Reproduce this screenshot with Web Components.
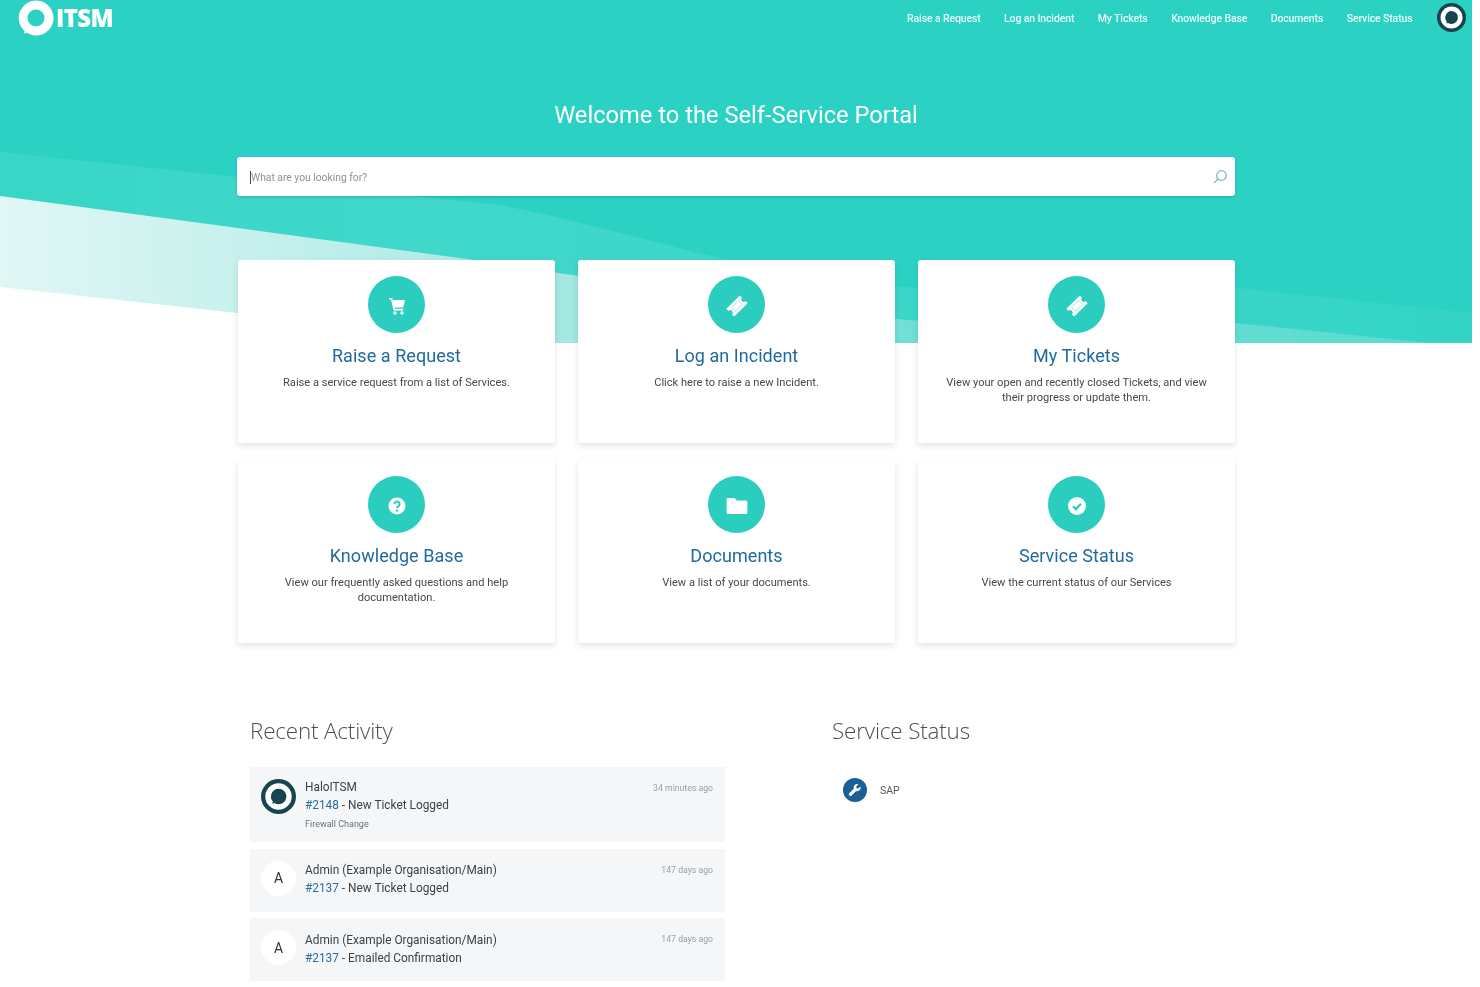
<!DOCTYPE html>
<html lang="en"><head><meta charset="utf-8"><title>Self-Service Portal</title>
<style>
html,body{margin:0;padding:0;background:#fff}
body{font-family:Roboto,"Liberation Sans",sans-serif;color:#3c4148;width:1480px;height:987px;overflow:hidden}
</style></head><body>
<itsm-portal></itsm-portal>
<script>
const ring=(size,dark)=>`<svg width="${size}" height="${size}" viewBox="0 0 36 36" aria-hidden="true">
${dark?'<circle cx="18" cy="18" r="18" fill="#17454f"/><circle cx="18" cy="18" r="13.6" fill="#fff"/>':''}
<path fill="${dark?'#17454f':'#fff'}" fill-rule="evenodd" d="${dark
?'M18 10a8 8 0 1 1-4.3 14.7L11.6 25.6l.6-2.4A8 8 0 0 1 18 10Z'
:'M18 .5a17.5 17.5 0 1 1-9.6 32.1L5.6 34l.9-3A17.5 17.5 0 0 1 18 .5ZM18 9.5a8.5 8.5 0 1 0 0 17 8.5 8.5 0 0 0 0-17Z'}"/></svg>`;
const ICONS={
cart:'<path fill="#fff" d="M1 1h3.2l.5 2H17l-1.8 7.4H6.6l.3 1.4h8.3v1.6H5.6L3 2.6H1Z"/><circle cx="7" cy="16" r="1.7" fill="#fff"/><circle cx="14" cy="16" r="1.7" fill="#fff"/>',
ticket:'<g transform="rotate(-45 9 9)"><path fill="#fff" d="M-.5 3.5h19v3a2.5 2.5 0 0 0 0 5v3h-19v-3a2.5 2.5 0 0 0 0-5Z"/><rect x="4" y="6.4" width="10" height="5.2" fill="none" stroke="#2bcdbf" stroke-width=".8" opacity=".55"/></g>',
help:'<circle cx="9" cy="9" r="8.5" fill="#fff"/><path fill="none" stroke="#2bcdbf" stroke-width="2" d="M6.4 7a2.6 2.6 0 1 1 3.9 2.3c-.9.5-1.3 1-1.3 2"/><circle cx="9" cy="13.6" r="1.2" fill="#2bcdbf"/>',
folder:'<path fill="#fff" d="M0 1h6.6l2.2 2.6H18a1.6 1.6 0 0 1 1.4 1.6v10.4a1.4 1.4 0 0 1-1.4 1.4H0a1.4 1.4 0 0 1-1.4-1.4V2.4A1.4 1.4 0 0 1 0 1Z"/>',
check:'<circle cx="9" cy="9" r="9" fill="#fff"/><path fill="none" stroke="#2bcdbf" stroke-width="2.2" d="m5 9.2 2.9 2.9L13 6.8"/>'
};
class ItsmLogo extends HTMLElement{constructor(){super();this.attachShadow({mode:'open'}).innerHTML=`<style>
:host{display:flex;align-items:center;gap:2px;color:#fff;font:800 24px/1 "Open Sans",sans-serif;letter-spacing:-.6px}
svg{display:block}</style>${ring(36,false)}<span>ITSM</span>`}}
class NavLink extends HTMLElement{constructor(){super();this.attachShadow({mode:'open'}).innerHTML=`<style>
:host{display:block;color:#fff;font:500 10.5px/1 Roboto,sans-serif;white-space:nowrap;letter-spacing:-.13px;opacity:.9}</style><slot></slot>`}}
class PortalHeader extends HTMLElement{constructor(){super();this.attachShadow({mode:'open'}).innerHTML=`<style>
:host{display:flex;align-items:center;justify-content:space-between;height:36px;padding:0 6px 0 18px;position:relative}
nav{display:flex;align-items:center;gap:23.5px;padding-top:2px}.u{margin-left:1px;display:block}</style>
<itsm-logo></itsm-logo><nav><nav-link>Raise a Request</nav-link><nav-link>Log an Incident</nav-link><nav-link>My Tickets</nav-link><nav-link>Knowledge Base</nav-link><nav-link>Documents</nav-link><nav-link>Service Status</nav-link><span class="u">${ring(29,true)}</span></nav>`}}
class HeroBg extends HTMLElement{constructor(){super();this.attachShadow({mode:'open'}).innerHTML=`<style>
:host{position:absolute;left:0;top:0;width:1472px;height:343px;display:block}svg{display:block}</style>
<svg width="1472" height="343" viewBox="0 0 1472 343"><defs>
<linearGradient id="g" x1="0" x2="1472" y1="0" y2="0" gradientUnits="userSpaceOnUse"><stop offset="0" stop-color="#e0f7f5"/><stop offset=".16" stop-color="#c8f1ed"/><stop offset=".38" stop-color="#a5e8e1"/><stop offset=".62" stop-color="#70dfd4"/><stop offset="1" stop-color="#58dbcf"/></linearGradient>
<linearGradient id="m" x1="0" x2="1472" y1="0" y2="0" gradientUnits="userSpaceOnUse"><stop offset="0" stop-color="#38d6c8"/><stop offset=".3" stop-color="#40d8ca"/><stop offset="1" stop-color="#33d4c6"/></linearGradient></defs>
<rect width="1472" height="343" fill="#2bd2c4"/>
<path d="M0 152 500 205C640 232 760 280 906 287 1010 292 1130 280 1237 288L1472 313V343H0Z" fill="url(#m)"/>
<path d="M0 196 467 259 565 274 906 320C1020 326 1130 316 1236 323L1430 343H0Z" fill="url(#g)"/>
<polygon points="0,287 510,343 0,343" fill="#fff"/></svg>`}}
class SearchBar extends HTMLElement{constructor(){super();this.attachShadow({mode:'open'}).innerHTML=`<style>
:host{display:flex;align-items:center;box-sizing:border-box;height:39px;background:#fff;border-radius:3px;padding:0 7px 0 13px;box-shadow:0 1px 3px rgba(0,70,70,.25);font:10.3px Roboto,sans-serif;color:#8c9196}
.t{flex:1;border-left:1.5px solid #3b4a55;line-height:13px;height:13px;white-space:nowrap;position:relative;top:1px}svg{display:block}</style>
<span class="t">What are you looking for?</span>
<svg width="16" height="16" viewBox="0 0 16 16" fill="none" stroke="#7fb9c4" stroke-width="1.3"><circle cx="9.5" cy="6.5" r="4.8"/><path d="M6 10 2 14"/></svg>`}}
class PortalCard extends HTMLElement{constructor(){super();const i=this.getAttribute('icon');this.attachShadow({mode:'open'}).innerHTML=`<style>
:host{display:flex;flex-direction:column;align-items:center;background:#fff;border-radius:3px;box-shadow:0 3px 6px rgba(40,50,60,.13);padding:16px 24px 0;text-align:center;box-sizing:border-box;height:183px}
.c{width:57px;height:57px;border-radius:50%;background:#2bcdbf;display:flex;align-items:center;justify-content:center;flex:none}
svg{display:block;overflow:visible;margin-top:2px}
h2{margin:12px 0 0;font:400 18px/22px Roboto,sans-serif;color:#1f6a9f;letter-spacing:.05px}
p{margin:8px 0 0;font:400 11.1px/15px Roboto,sans-serif;color:#44494f}</style>
<div class="c"><svg width="18" height="18" viewBox="0 0 18 18">${ICONS[i]}</svg></div>
<h2>${this.getAttribute('heading')}</h2><p><slot></slot></p>`}}
class CardGrid extends HTMLElement{constructor(){super();this.attachShadow({mode:'open'}).innerHTML=`<style>
:host{display:grid;grid-template-columns:repeat(3,317px);column-gap:23px;row-gap:17px;justify-content:start;padding-left:238px}</style><slot></slot>`}}
class ActivityRow extends HTMLElement{constructor(){super();const g=this.getAttribute('avatar');const sub=this.getAttribute('sub');this.attachShadow({mode:'open'}).innerHTML=`<style>
:host{display:flex;background:#f5f6f8;padding:12px 12px 0 11px;box-sizing:border-box;height:${this.getAttribute('h')}px;gap:9px}
.a{width:35px;height:35px;border-radius:50%;background:#fff;display:flex;align-items:center;justify-content:center;font:400 14px Roboto,sans-serif;color:#2d3238;flex:none}
.a svg{display:block}
.b{flex:1;min-width:0;font:400 11.85px/${sub?'17.5px':'18px'} Roboto,sans-serif;color:#3d4248;padding-top:${sub?'0':'.5px'}}
.s{font-size:9px;line-height:12px;margin-top:4px;color:#6d7278}
.l{color:#2a6f9f}
.t{font-size:8.7px;line-height:18px;color:#9a9ea3;white-space:nowrap}</style>
<div class="a">${g==='logo'?ring(35,true):g}</div>
<div class="b"><div>${this.getAttribute('who')}</div><div><span class="l">${this.getAttribute('ref')}</span> - <slot></slot></div>${sub?`<div class="s">${sub}</div>`:''}</div>
<div class="t">${this.getAttribute('when')}</div>`}}
class SectionHead extends HTMLElement{constructor(){super();this.attachShadow({mode:'open'}).innerHTML=`<style>
:host{display:block;font:300 22.4px/30px "Open Sans",sans-serif;color:#4a4f55;letter-spacing:-.15px}</style><slot></slot>`}}
class StatusRow extends HTMLElement{constructor(){super();this.attachShadow({mode:'open'}).innerHTML=`<style>
:host{display:flex;align-items:center;gap:13px;font:400 10.5px Roboto,sans-serif;color:#555a60;padding-left:11px}
.c{width:24px;height:24px;border-radius:50%;background:#1b5f97;display:flex;align-items:center;justify-content:center}svg{display:block}</style>
<span class="c"><svg width="14" height="14" viewBox="0 0 14 14"><path fill="#fff" d="M12.6 3.4 10.3 5.6 8.6 5.2 8.2 3.5l2.3-2.3a3.6 3.6 0 0 0-4.7 4.5L1.4 10.1a1.6 1.6 0 0 0 2.3 2.3l4.4-4.4a3.6 3.6 0 0 0 4.5-4.6Z"/></svg></span><slot></slot>`}}
class ItsmPortal extends HTMLElement{constructor(){super();this.attachShadow({mode:'open'}).innerHTML=`<style>
:host{display:block;position:relative;width:1472px;height:987px;overflow:hidden;filter:blur(.35px)}
.w{position:relative}
h1{margin:0;font:400 23.7px/30px Roboto,sans-serif;color:#fff;text-align:center;padding-top:64px}
search-bar{width:998px;margin:27px 0 0 237px}
card-grid{margin-top:64px}
.low{display:grid;grid-template-columns:475px 1fr;column-gap:107px;margin:73px 0 0 250px}
.rows{display:flex;flex-direction:column;gap:6.5px;margin-top:21px}
.st{margin-top:32px}</style>
<hero-bg></hero-bg><div class="w"><portal-header></portal-header>
<h1>Welcome to the Self-Service Portal</h1><search-bar></search-bar>
<card-grid>
<portal-card icon="cart" heading="Raise a Request">Raise a service request from a list of Services.</portal-card>
<portal-card icon="ticket" heading="Log an Incident">Click here to raise a new Incident.</portal-card>
<portal-card icon="ticket" heading="My Tickets">View your open and recently closed Tickets, and view their progress or update them.</portal-card>
<portal-card icon="help" heading="Knowledge Base">View our frequently asked questions and help documentation.</portal-card>
<portal-card icon="folder" heading="Documents">View a list of your documents.</portal-card>
<portal-card icon="check" heading="Service Status">View the current status of our Services</portal-card>
</card-grid>
<div class="low"><section><section-head>Recent Activity</section-head><div class="rows">
<activity-row h="75" avatar="logo" who="HaloITSM" ref="#2148" when="34 minutes ago" sub="Firewall Change">New Ticket Logged</activity-row>
<activity-row h="63" avatar="A" who="Admin (Example Organisation/Main)" ref="#2137" when="147 days ago">New Ticket Logged</activity-row>
<activity-row h="63" avatar="A" who="Admin (Example Organisation/Main)" ref="#2137" when="147 days ago">Emailed Confirmation</activity-row>
</div></section>
<section><section-head>Service Status</section-head><div class="st"><status-row>SAP</status-row></div></section></div>
</div>`}}
[['itsm-logo',ItsmLogo],['nav-link',NavLink],['portal-header',PortalHeader],['hero-bg',HeroBg],['search-bar',SearchBar],['portal-card',PortalCard],['card-grid',CardGrid],['activity-row',ActivityRow],['section-head',SectionHead],['status-row',StatusRow],['itsm-portal',ItsmPortal]].forEach(([n,c])=>customElements.define(n,c));
</script></body></html>
